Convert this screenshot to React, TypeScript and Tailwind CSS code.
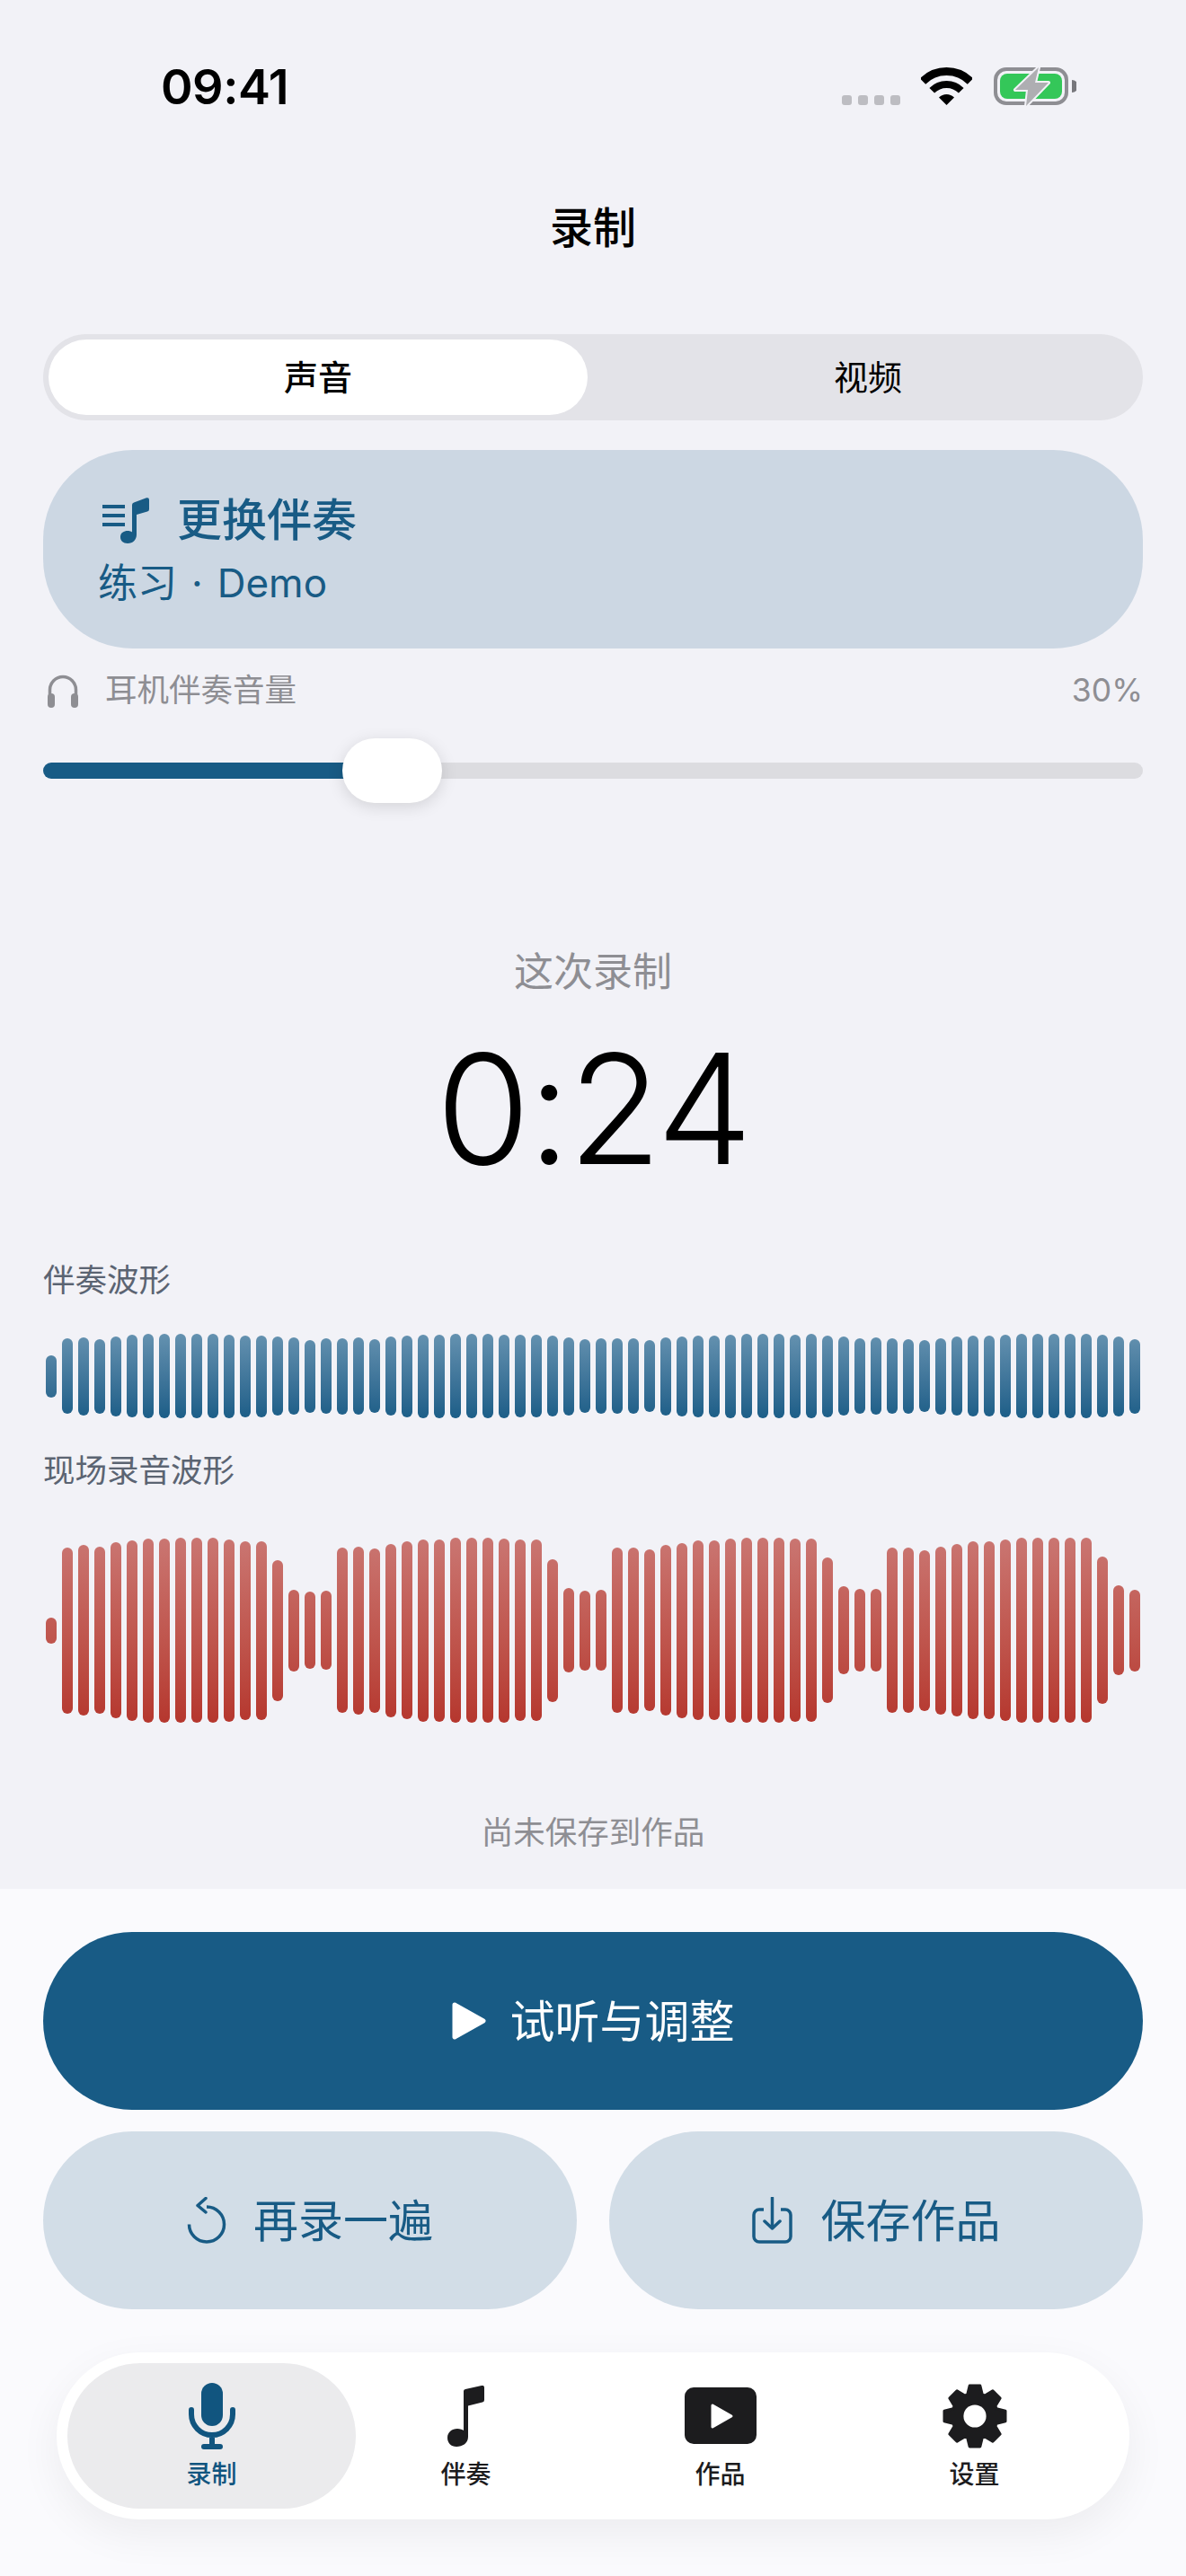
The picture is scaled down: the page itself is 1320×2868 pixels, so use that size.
import React from 'react';

const BLUE = [47,84,87,83,89,92,94,94,94,94,94,93,91,91,88,86,81,84,85,86,82,88,91,93,93,94,94,94,93,92,92,90,87,82,84,84,84,80,87,89,91,91,93,94,94,94,93,94,91,88,84,86,84,83,80,85,88,90,90,92,94,94,94,94,94,92,89,83];
const RED = [29,185,190,186,196,201,205,205,206,206,206,203,199,199,157,91,86,88,184,187,183,193,198,203,203,206,206,206,205,202,202,159,94,89,90,184,185,180,190,195,200,200,205,206,206,206,204,204,162,98,92,92,184,184,179,187,192,198,198,202,206,206,206,206,206,164,100,91];

function gearPath() {
  const pts: string[] = [];
  for (let k = 0; k < 8; k++) {
    const a = (k * Math.PI) / 4;
    const p = (r: number, off: number) => {
      const x = 36 + r * Math.sin(a + off);
      const y = 36 - r * Math.cos(a + off);
      return `${x.toFixed(2)} ${y.toFixed(2)}`;
    };
    pts.push(p(25.5, -0.33), p(34.5, -0.17), p(34.5, 0.17), p(25.5, 0.33));
  }
  return 'M' + pts.join(' L') + ' Z';
}

const Wave = ({ bars, height, className }: { bars: number[]; height: number; className: string }) => (
  <div className="flex items-center justify-center gap-[6px]" style={{ height }}>
    {bars.map((h, i) => (
      <div
        key={i}
        className={`w-[12px] shrink-0 rounded-full bg-center bg-no-repeat ${className}`}
        style={{ height: h, backgroundSize: `100% ${height}px` }}
      />
    ))}
  </div>
);

const StatusIcons = () => (
  <div className="flex items-start">
    <div className="flex gap-[7px] mt-[31px]">
      <div className="w-[11px] h-[11px] rounded-[3px] bg-[#BDBDC2]" />
      <div className="w-[11px] h-[11px] rounded-[3px] bg-[#BDBDC2]" />
      <div className="w-[11px] h-[11px] rounded-[3px] bg-[#BDBDC2]" />
      <div className="w-[11px] h-[11px] rounded-[3px] bg-[#BDBDC2]" />
    </div>
    <svg className="ml-[23px]" width="57" height="42" viewBox="0 0 57 42">
      <path d="M2 15.5 A37.5 37.5 0 0 1 55 15.5" fill="none" stroke="#000" strokeWidth="9" />
      <path d="M12.24 25.74 A23 23 0 0 1 44.76 25.74" fill="none" stroke="#000" strokeWidth="8" />
      <path d="M28.5 42 L20 33.5 A12 12 0 0 1 37 33.5 Z" fill="#000" />
    </svg>
    <svg className="ml-[24px]" width="92" height="43" viewBox="0 0 92 43">
      <rect x="2" y="2" width="79" height="38" rx="12" fill="none" stroke="#8E8E93" strokeWidth="4" />
      <rect x="7" y="7" width="69" height="28" rx="8" fill="#34C759" />
      <path d="M87 14 a7 7 0 0 1 0 14 Z" fill="#77777C" />
      <path d="M50 0 L24 25 H38 L36 43 L61 17 H46 Z" fill="#AEAEB2" stroke="#F2F2F7" strokeWidth="4" strokeLinejoin="round" paintOrder="stroke" />
    </svg>
  </div>
);

const NavItem = ({ label, icon, active }: { label: string; icon: React.ReactNode; active?: boolean }) => (
  <div className={`flex flex-col items-center rounded-[81px] ${active ? '-mx-[19px] bg-[#EBEBED] text-[#11557F]' : 'text-[#1C1C1E]'}`}>
    <div className="h-[104px] flex items-center justify-center pt-[13px]">{icon}</div>
    <span className="text-[28px] leading-[36px] font-medium mt-[2px]">{label}</span>
  </div>
);

export default function App() {
  return (
    <div className="w-[1320px] h-[2868px] overflow-hidden flex flex-col bg-[#F2F2F7] text-black font-[Inter,'Noto_Sans_CJK_SC',sans-serif]">
      <div className="px-12 flex flex-col">
        {/* status bar */}
        <div className="h-[124px] flex justify-between pl-[131px] pr-[74px] pt-[70px]">
          <span className="text-[54px] leading-[54px] font-semibold tracking-[-0.5px]">09:41</span>
          <div className="mt-[5px]">
            <StatusIcons />
          </div>
        </div>

        <div className="mt-[106px] h-[48px] leading-[48px] text-center text-[48px] font-medium">录制</div>

        {/* tabs */}
        <div className="mt-[94px] h-[96px] rounded-[48px] bg-[#E3E3E8] p-[6px] grid grid-cols-2 gap-3">
          <div className="rounded-[42px] bg-white flex items-center justify-center text-[38px] font-medium">声音</div>
          <div className="flex items-center justify-center text-[38px]">视频</div>
        </div>

        {/* backing track card */}
        <div className="mt-[33px] h-[221px] rounded-[100px] bg-[#CCD7E3] pl-[61px] pt-[49px] text-[#185B85]">
          <div className="flex items-center h-[58px]">
            <svg className="ml-[4px]" width="53" height="51" viewBox="0 0 53 51" fill="#185B85">
              <path d="M1 10 H26 M1 20 H26 M1 30 H26" stroke="#185B85" strokeWidth="4" fill="none" />
              <path d="M34 8 Q34 6 36 5.5 L50 0.3 Q53 -0.5 53 2.5 V13 Q53 15 51 15.5 L39 19 V41 C39 47 35 51 29 51 C24 51 21 48 21 44 C21 39 25 37 29 37 C31 37 33 37.5 34 38.5 Z" />
            </svg>
            <span className="ml-[31px] text-[50px] leading-[58px] font-medium">更换伴奏</span>
          </div>
          <div className="mt-[14px] text-[44px] leading-[54px]">
            练习<span className="mx-[16px]">·</span>Demo
          </div>
        </div>

        {/* monitor volume */}
        <div className="mt-[25px] h-[44px] flex items-center text-[35.5px] text-[#8E8E93]">
          <svg className="ml-[4px]" width="36" height="38" viewBox="0 0 36 38">
            <path d="M3.5 26 V18 a14.5 14.5 0 0 1 29 0 V26" fill="none" stroke="#8E8E93" strokeWidth="3.5" />
            <rect x="1" y="22" width="8" height="16" rx="4" fill="#8E8E93" />
            <rect x="27" y="22" width="8" height="16" rx="4" fill="#8E8E93" />
          </svg>
          <span className="ml-[29px]">耳机伴奏音量</span>
          <span className="ml-auto">30%</span>
        </div>

        <div className="mt-[31px] h-[72px] flex items-center">
          <div className="w-[343px] h-[18px] rounded-l-full bg-[#185B85]" />
          <div className="relative z-10 w-[111px] h-[72px] -mx-[10px] rounded-[36px] bg-white shadow-[0_4px_18px_rgba(0,0,0,0.13)]" />
          <div className="flex-1 h-[18px] rounded-r-full bg-[#DCDCE0]" />
        </div>

        {/* timer */}
        <div className="mt-[158px] h-[60px] leading-[60px] text-center text-[44px] text-[#8E8E93]">这次录制</div>
        <div className="mt-[32px] h-[180px] leading-[180px] text-center text-[170px] font-light tracking-[-3px]">0:24</div>

        {/* waveforms */}
        <div className="mt-[80px] h-[44px] leading-[44px] text-[35.5px] text-[#5B6472]">伴奏波形</div>
        <div className="mt-[36px]">
          <Wave bars={BLUE} height={96} className="bg-linear-to-b from-[#6592B0] to-[#1A5D87]" />
        </div>
        <div className="mt-[36px] h-[44px] leading-[44px] text-[35.5px] text-[#5B6472]">现场录音波形</div>
        <div className="mt-[51px]">
          <Wave bars={RED} height={208} className="bg-linear-to-b from-[#CA7672] to-[#B5362D]" />
        </div>

        <div className="mt-[100px] h-[44px] leading-[44px] text-center text-[35.5px] text-[#8E8E93]">尚未保存到作品</div>
      </div>

      {/* bottom actions */}
      <div className="mt-[40px] flex-1 bg-[#FAFAFD] px-12 pt-12 flex flex-col">
        <div className="h-[198px] rounded-[99px] bg-[#185B85] flex items-center justify-center text-white text-[50px]">
          <svg width="38" height="42" viewBox="0 0 38 42" fill="#fff">
            <path d="M3 3 L35 21 L3 39 Z" stroke="#fff" strokeWidth="5" strokeLinejoin="round" />
          </svg>
          <span className="ml-[27px] mt-[2px]">试听与调整</span>
        </div>
        <div className="mt-6 grid grid-cols-2 gap-[36px] text-[50px] text-[#185B85]">
          <div className="h-[198px] rounded-[99px] bg-[#D2DDE7] flex items-center justify-center">
            <svg width="44" height="52" viewBox="0 0 44 52" fill="none" stroke="#185B85" strokeWidth="3.5">
              <path d="M22 11 A19.5 19.5 0 1 1 2.5 30.5" />
              <path d="M21 1.5 L12 9.5 L21 17" strokeLinejoin="round" strokeLinecap="round" />
            </svg>
            <span className="ml-[30px] mt-[2px]">再录一遍</span>
          </div>
          <div className="h-[198px] rounded-[99px] bg-[#D2DDE7] flex items-center justify-center">
            <svg width="45" height="52" viewBox="0 0 45 52" fill="none" stroke="#185B85" strokeWidth="3.5">
              <path d="M13 14 H8 a6 6 0 0 0 -6 6 V44 a6 6 0 0 0 6 6 H37 a6 6 0 0 0 6 -6 V20 a6 6 0 0 0 -6 -6 H32" />
              <path d="M22.5 1 V35 M14 27 L22.5 35 L31 27" strokeLinecap="round" strokeLinejoin="round" />
            </svg>
            <span className="ml-[32px] mt-[2px]">保存作品</span>
          </div>
        </div>

        {/* tab bar */}
        <div className="mt-12 mx-[15px] h-[186px] rounded-[93px] bg-white py-3 px-[31px] grid grid-cols-4 shadow-[0_16px_48px_rgba(0,0,0,0.06)]">
          <NavItem
            active
            label="录制"
            icon={
              <svg width="52" height="74" viewBox="0 0 52 74">
                <rect x="14" y="0" width="24" height="48" rx="12" fill="#11557F" />
                <path d="M3 30 V35 a23 23 0 0 0 46 0 V30 M26 58 V71 M17 71 H35" fill="none" stroke="#11557F" strokeWidth="6" strokeLinecap="round" />
              </svg>
            }
          />
          <NavItem
            label="伴奏"
            icon={
              <svg width="41" height="68" viewBox="0 0 41 68" fill="#1C1C1E">
                <path d="M18 6 Q18 4.5 20 4 L38 0 Q41 -0.5 41 2 V16 Q41 18 39 18.5 L23 22.5 V57 C23 64 17 68 10 68 C4 68 0 64 0 58 C0 52 5 48 11 48 C14 48 17 49 18 50 Z" />
              </svg>
            }
          />
          <NavItem
            label="作品"
            icon={
              <svg width="80" height="63" viewBox="0 0 80 63">
                <rect width="80" height="63" rx="10" fill="#1C1C1E" />
                <path d="M31 20 L52 32 L31 44 Z" fill="#fff" stroke="#fff" strokeWidth="3" strokeLinejoin="round" />
              </svg>
            }
          />
          <NavItem
            label="设置"
            icon={
              <svg width="72" height="72" viewBox="0 0 72 72">
                <path d={gearPath()} fill="#1C1C1E" stroke="#1C1C1E" strokeWidth="3" strokeLinejoin="round" />
                <circle cx="36" cy="36" r="12.6" fill="#fff" />
              </svg>
            }
          />
        </div>
      </div>
    </div>
  );
}
